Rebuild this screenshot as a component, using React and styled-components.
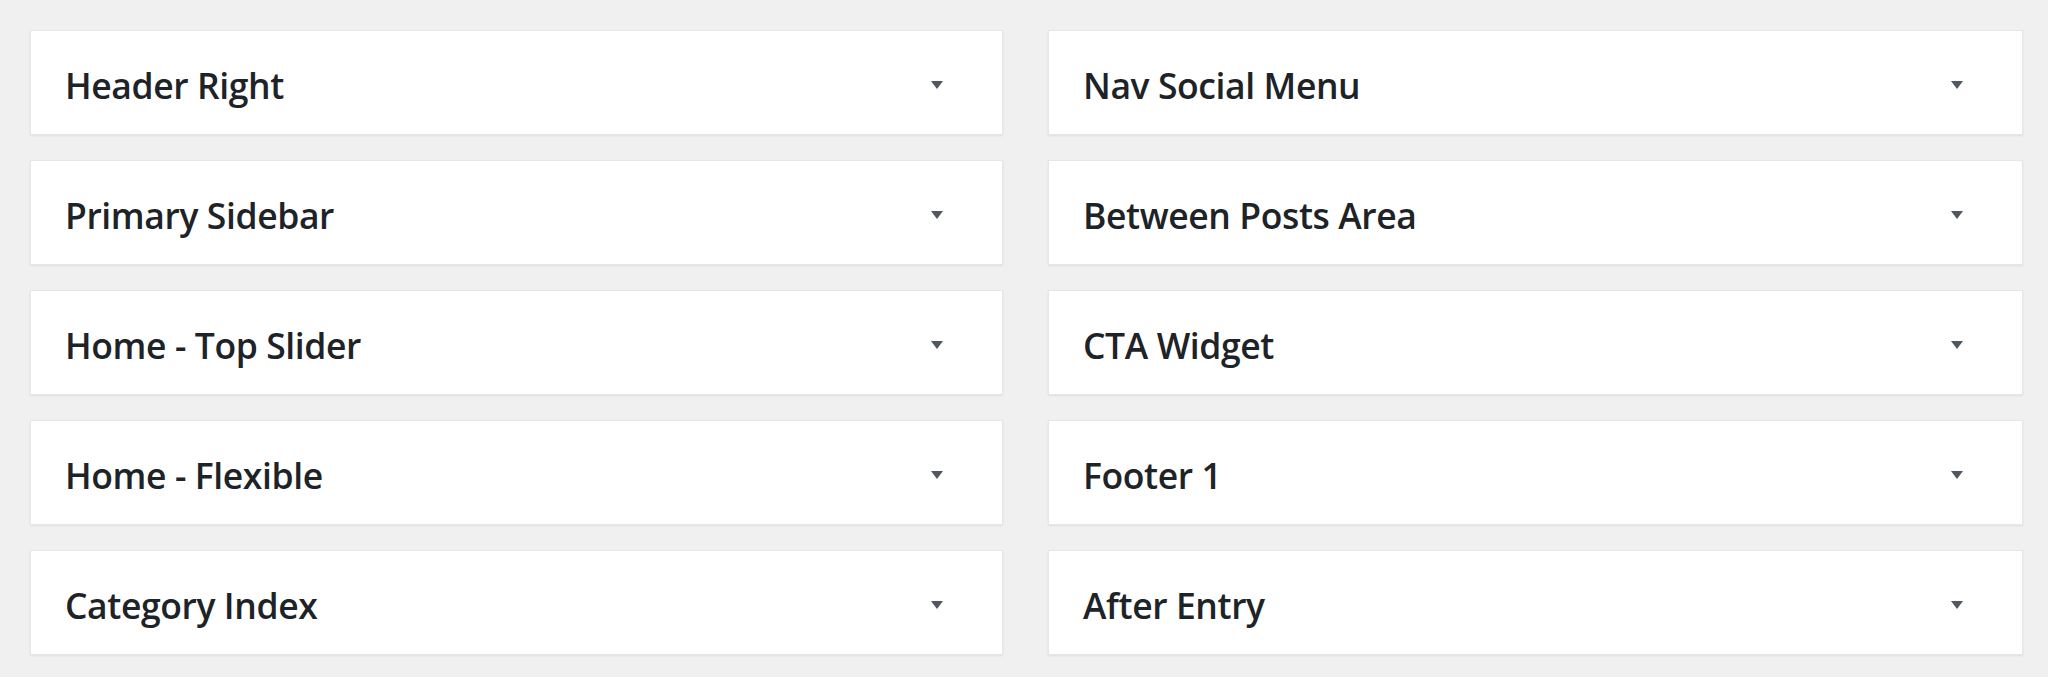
import React from 'react';
import styled, { createGlobalStyle } from 'styled-components';

const GlobalStyle = createGlobalStyle`
  html, body {
    margin: 0;
    padding: 0;
    background: #f0f0f1;
  }
  body {
    font-family: "Open Sans", "Noto Sans", sans-serif;
  }
`;

const Page = styled.div`
  width: 2048px;
  height: 677px;
  box-sizing: border-box;
  padding: 30px 25px 0 30px;
  background: #f0f0f1;
`;

const Grid = styled.div`
  display: grid;
  grid-template-columns: 973px 975px;
  column-gap: 45px;
  row-gap: 25px;
  grid-auto-rows: 105px;
`;

const Area = styled.div`
  display: flex;
  align-items: center;
  justify-content: space-between;
  box-sizing: border-box;
  padding: 4px 58px 0 34px;
  background: #fff;
  border: 1px solid #e6e6e8;
  box-shadow: 0 1px 2px rgba(0, 0, 0, 0.07);
`;

const Title = styled.h3`
  margin: 0;
  font-size: 35.5px;
  font-weight: 600;
  color: #1d2327;
  letter-spacing: -0.4px;
`;

const Toggle = styled.span`
  display: flex;
  width: 14px;
  height: 10px;
  color: #50575e;
`;

const Caret = () => (
  <Toggle>
    <svg width="14" height="10" viewBox="0 0 14 10">
      <path d="M1 1h12L7 9z" fill="currentColor" />
    </svg>
  </Toggle>
);

const areas = [
  'Header Right',
  'Nav Social Menu',
  'Primary Sidebar',
  'Between Posts Area',
  'Home - Top Slider',
  'CTA Widget',
  'Home - Flexible',
  'Footer 1',
  'Category Index',
  'After Entry',
];

export default function App() {
  return (
    <Page>
      <GlobalStyle />
      <Grid>
        {areas.map(name => (
          <Area key={name}>
            <Title>{name}</Title>
            <Caret />
          </Area>
        ))}
      </Grid>
    </Page>
  );
}
